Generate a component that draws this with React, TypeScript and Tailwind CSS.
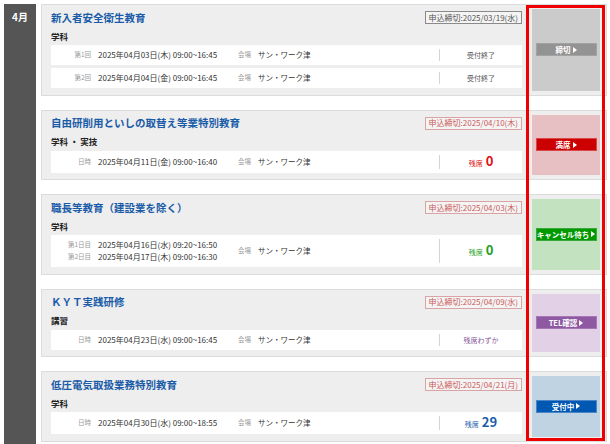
type Session = { label: string; date: string };

type Course = {
  title: string;
  kind: string;
  deadline: string;
  closed?: boolean;
  rows: { sessions: Session[]; status: React.ReactNode }[];
  panel: string;
  button: string;
  buttonText: string;
};

const seat = (color: string, num: string) => (
  <span className={`flex items-baseline gap-[3px] leading-[12px] ${color}`}>
    <span className="text-[7px]">残席</span>
    <span className="text-[13px] font-bold leading-[12px]">{num}</span>
  </span>
);

const courses: Course[] = [
  {
    title: '新入者安全衛生教育',
    kind: '学科',
    deadline: '申込締切:2025/03/19(水)',
    closed: true,
    rows: [
      {
        sessions: [{ label: '第1回', date: '2025年04月03日(木) 09:00~16:45' }],
        status: <span className="text-[7px] text-[#555]">受付終了</span>,
      },
      {
        sessions: [{ label: '第2回', date: '2025年04月04日(金) 09:00~16:45' }],
        status: <span className="text-[7px] text-[#555]">受付終了</span>,
      },
    ],
    panel: 'bg-[#cbcbcb]',
    button: 'bg-[#939393] border-[#a3a3a3]',
    buttonText: '締切',
  },
  {
    title: '自由研削用といしの取替え等業特別教育',
    kind: '学科 ・ 実技',
    deadline: '申込締切:2025/04/10(木)',
    rows: [
      {
        sessions: [{ label: '日時', date: '2025年04月11日(金) 09:00~16:40' }],
        status: seat('text-[#e01010]', '0'),
      },
    ],
    panel: 'bg-[#e6c0c3]',
    button: 'bg-[#cc0000] border-[#d84848]',
    buttonText: '満席',
  },
  {
    title: '職長等教育（建設業を除く）',
    kind: '学科',
    deadline: '申込締切:2025/04/03(木)',
    rows: [
      {
        sessions: [
          { label: '第1日目', date: '2025年04月16日(水) 09:20~16:50' },
          { label: '第2日目', date: '2025年04月17日(木) 09:00~16:30' },
        ],
        status: seat('text-[#22a022]', '0'),
      },
    ],
    panel: 'bg-[#c3e2bf]',
    button: 'bg-[#009900] border-[#3aa83a]',
    buttonText: 'キャンセル待ち',
  },
  {
    title: 'ＫＹＴ実践研修',
    kind: '講習',
    deadline: '申込締切:2025/04/09(水)',
    rows: [
      {
        sessions: [{ label: '日時', date: '2025年04月23日(水) 09:00~16:45' }],
        status: <span className="text-[7px] text-[#8a5a9a]">残席わずか</span>,
      },
    ],
    panel: 'bg-[#e2d0e6]',
    button: 'bg-[#8f58a3] border-[#a578b5]',
    buttonText: 'TEL確認',
  },
  {
    title: '低圧電気取扱業務特別教育',
    kind: '学科',
    deadline: '申込締切:2025/04/21(月)',
    rows: [
      {
        sessions: [{ label: '日時', date: '2025年04月30日(水) 09:00~18:55' }],
        status: seat('text-[#1a5ca8]', '29'),
      },
    ],
    panel: 'bg-[#c0d3e3]',
    button: 'bg-[#0058b2] border-[#4a86c6]',
    buttonText: '受付中',
  },
];

function CourseCard({ c }: { c: Course }) {
  return (
    <div className="flex border border-[#dcdcdc] bg-[#eeeeee]">
      <div className="w-[471px] pl-[9px] pt-[5.5px] pb-[6.5px] box-content">
        <div className="flex h-[14px] items-center justify-between">
          <span className="text-[10.5px] font-bold leading-[14px] text-[#1a5ca8]">{c.title}</span>
          <span
            className={`flex h-[13px] items-center border bg-[#f4f4f4] px-[3px] text-[8px] leading-none ${
              c.closed ? 'border-[#8a8a8a] text-[#555]' : 'border-[#dba4a4] text-[#cc5a5a]'
            }`}
          >
            {c.deadline}
          </span>
        </div>
        <div className="mt-[5px] text-[8.5px] font-bold leading-[12px] text-[#222]">{c.kind}</div>
        <div className="mt-[3.5px] flex flex-col gap-[3px]">
          {c.rows.map((r, i) => (
            <div key={i} className="flex bg-white py-[4px]">
              <div className="flex w-[187px] flex-col justify-center">
                {r.sessions.map((s) => (
                  <div key={s.label} className="flex h-[12px] items-center">
                    <span className="w-[40px] text-right text-[6.5px] text-[#999]">{s.label}</span>
                    <span className="ml-[7px] text-[8px] text-[#333]">{s.date}</span>
                  </div>
                ))}
              </div>
              <div className="flex flex-1 items-center">
                <span className="text-[6.5px] text-[#999]">会場</span>
                <span className="ml-[7px] text-[7.5px] text-[#333]">サン・ワーク津</span>
              </div>
              <div className="flex w-[83px] items-center justify-center border-l border-[#d4d4d4] leading-[12px]">
                {r.status}
              </div>
            </div>
          ))}
        </div>
      </div>
      <div className={`my-[4px] ml-[10px] flex w-[68px] items-center justify-center ${c.panel}`}>
        <div
          className={`flex h-[13px] w-[61px] items-center justify-center gap-[2px] whitespace-nowrap border text-[7.5px] font-bold text-white ${c.button}`}
        >
          <span className="leading-none">{c.buttonText}</span>
          <svg width="4" height="6" viewBox="0 0 4 6" className="shrink-0">
            <path d="M0 0 L4 3 L0 6 Z" fill="#fff" />
          </svg>
        </div>
      </div>
    </div>
  );
}

export default function App() {
  return (
    <div
      className="relative flex h-[444px] w-[610px] overflow-hidden bg-white pl-[4px] pt-[4px]"
      style={{ fontFamily: '"Noto Sans CJK JP", "Noto Sans", sans-serif' }}
    >
      <div className="w-[32px] shrink-0 bg-[#555555] pt-[6px] text-center text-[10px] font-bold leading-[14px] text-white">
        4月
      </div>
      <div className="ml-[5px] flex w-[566px] flex-col gap-[14px]">
        {courses.map((c) => (
          <CourseCard key={c.title} c={c} />
        ))}
      </div>
      <div className="absolute left-[526px] top-[5px] h-[436px] w-[79px] border-[3px] border-[#ee0000]" />
    </div>
  );
}
